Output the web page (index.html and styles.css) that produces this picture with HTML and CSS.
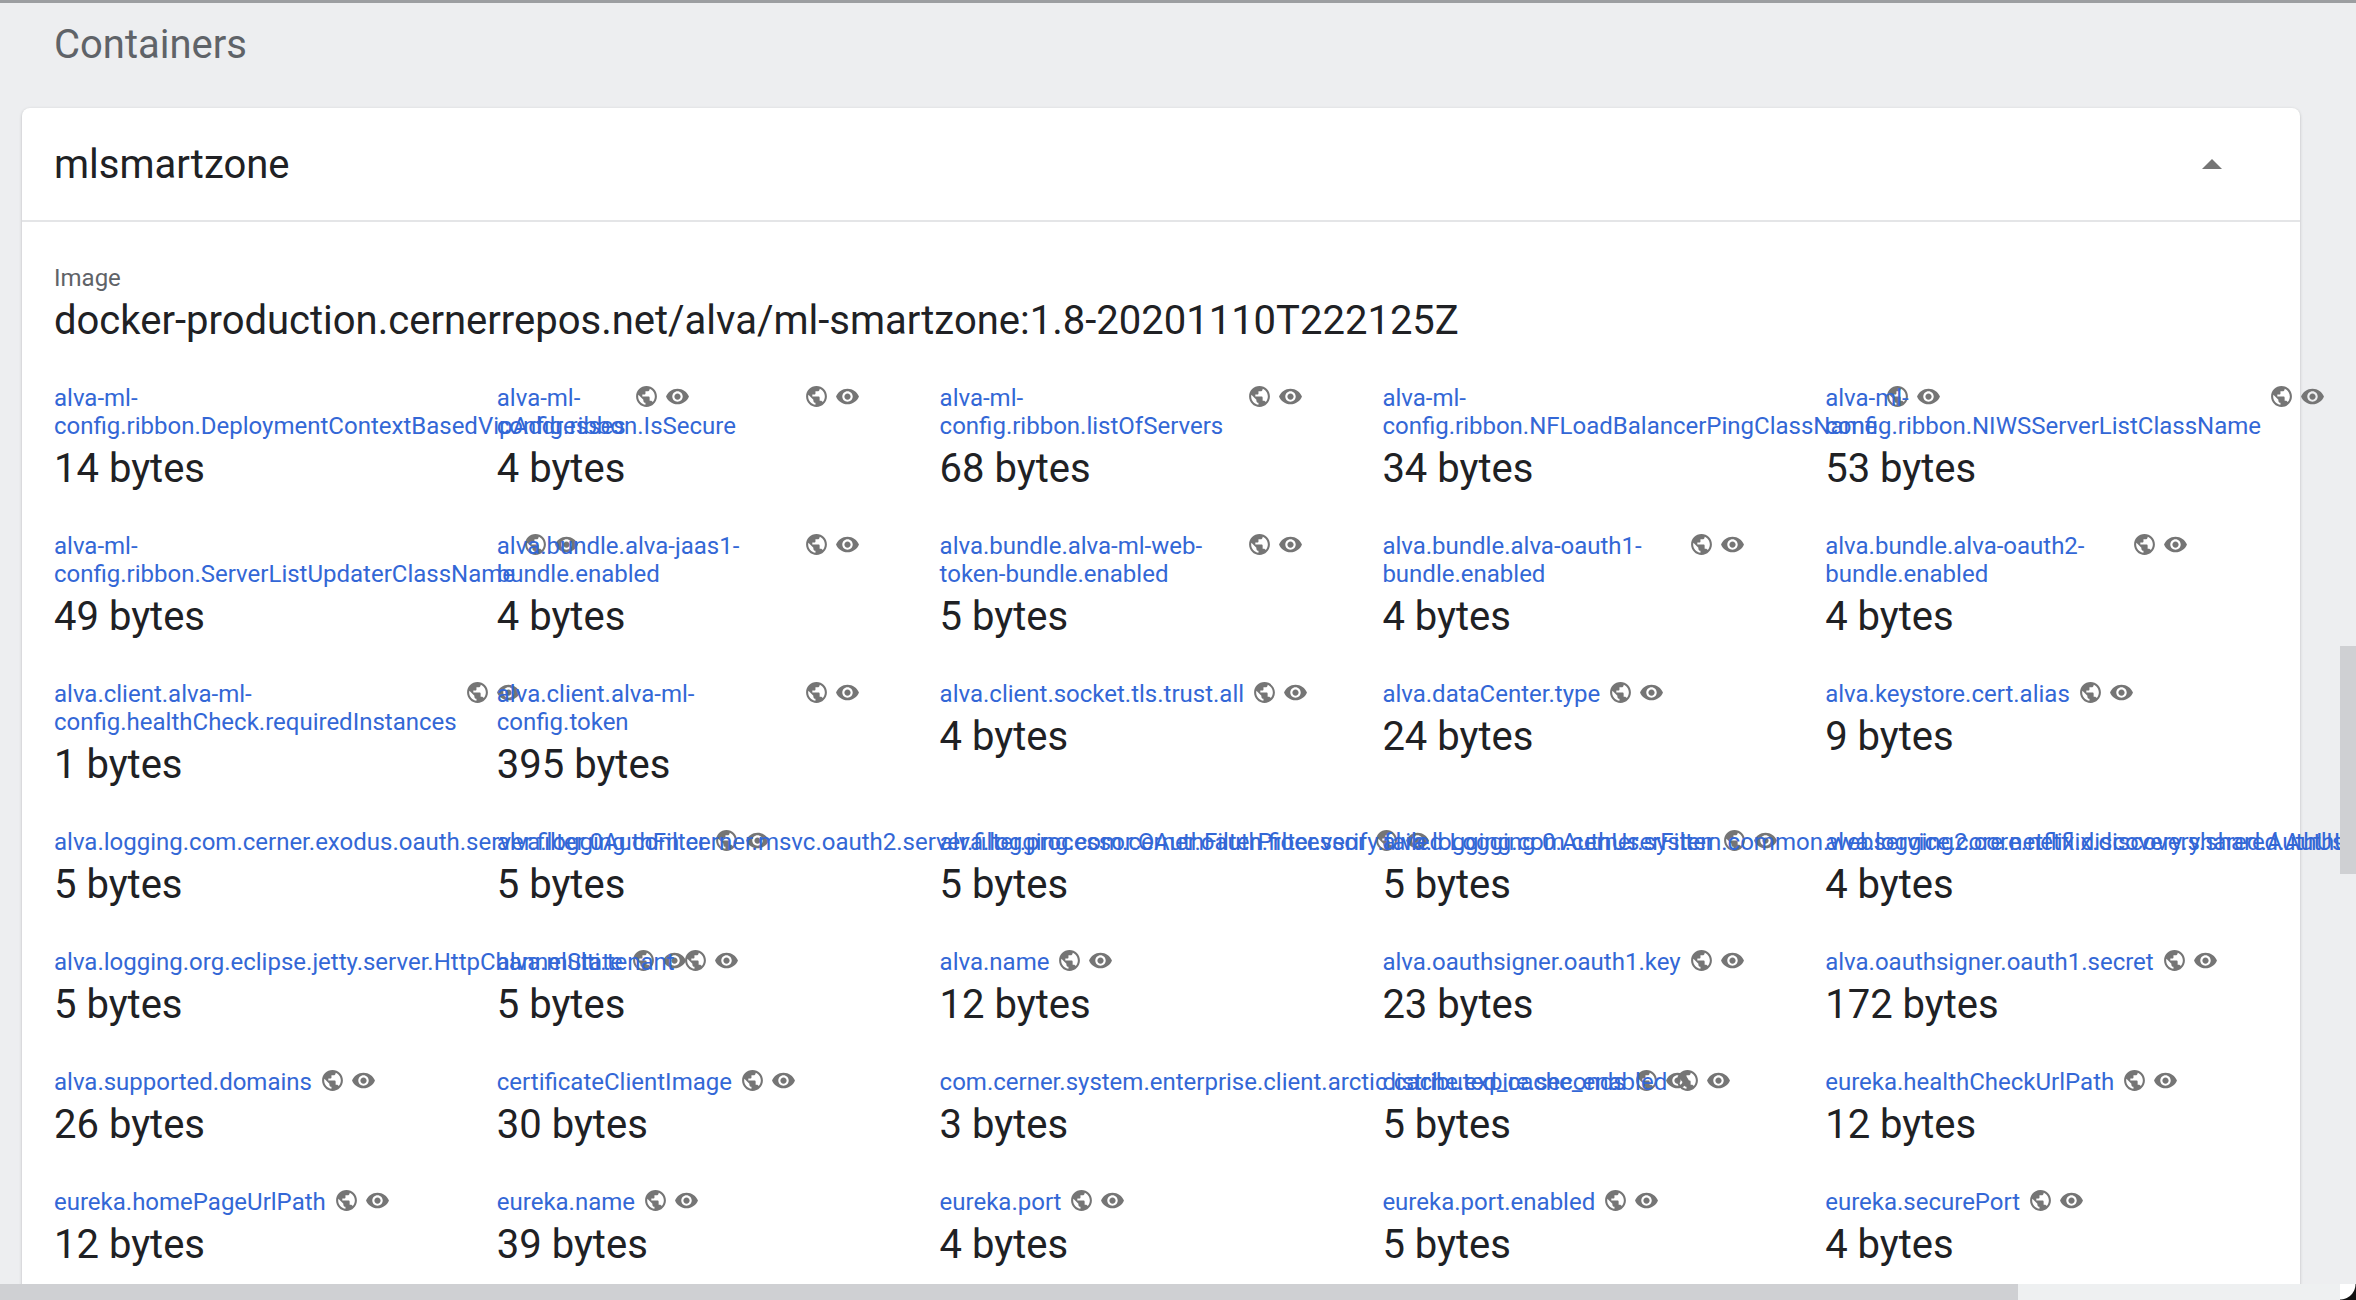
FILE: index.html
```html
<!DOCTYPE html>
<html lang="en">
<head>
  <meta charset="UTF-8" />
  <title>Containers</title>
  <meta name="viewport" content="width=device-width, initial-scale=1.0" />
  <link rel="stylesheet" href="styles.css">
</head>
<body>

<svg class="icon-defs" aria-hidden="true">
  <symbol id="i-public" viewBox="0 0 24 24"><path d="M12 2C6.48 2 2 6.48 2 12s4.48 10 10 10 10-4.48 10-10S17.52 2 12 2zm-1 17.93c-3.95-.49-7-3.85-7-7.93 0-.62.08-1.21.21-1.79L9 15v1c0 1.1.9 2 2 2v1.93zm6.9-2.54c-.26-.81-1-1.39-1.9-1.39h-1v-3c0-.55-.45-1-1-1H8v-2h2c.55 0 1-.45 1-1V7h2c1.1 0 2-.9 2-2v-.41c2.93 1.19 5 4.06 5 7.41 0 2.08-.8 3.97-2.1 5.39z"/></symbol>
  <symbol id="i-eye" viewBox="0 0 24 24"><path d="M12 4.5C7 4.5 2.73 7.61 1 12c1.73 4.39 6 7.5 11 7.5s9.27-3.11 11-7.5c-1.73-4.39-6-7.5-11-7.5zM12 17c-2.76 0-5-2.24-5-5s2.24-5 5-5 5 2.24 5 5-2.24 5-5 5zm0-8c-1.66 0-3 1.34-3 3s1.34 3 3 3 3-1.34 3-3-1.34-3-3-3z"/></symbol>
</svg>

<div class="page">
  <h2 class="section-title">Containers</h2>

  <section class="card">
    <header class="card-head">
      <h3>mlsmartzone</h3>
      <span class="caret"></span>
    </header>

    <div class="card-body">
      <div class="image-label">Image</div>
      <div class="image-value">docker-production.cernerrepos.net/alva/ml-smartzone:1.8-20201110T222125Z</div>

      <div class="env-grid">
        <div class="env"><div class="env-head"><a class="env-name">alva-ml-config.ribbon.DeploymentContextBasedVipAddresses</a><span class="env-icons"><svg><use href="#i-public"/></svg><svg><use href="#i-eye"/></svg></span></div><div class="env-size">14 bytes</div></div>
        <div class="env"><div class="env-head"><a class="env-name">alva-ml-config.ribbon.IsSecure</a><span class="env-icons"><svg><use href="#i-public"/></svg><svg><use href="#i-eye"/></svg></span></div><div class="env-size">4 bytes</div></div>
        <div class="env"><div class="env-head"><a class="env-name">alva-ml-config.ribbon.listOfServers</a><span class="env-icons"><svg><use href="#i-public"/></svg><svg><use href="#i-eye"/></svg></span></div><div class="env-size">68 bytes</div></div>
        <div class="env"><div class="env-head"><a class="env-name">alva-ml-config.ribbon.NFLoadBalancerPingClassName</a><span class="env-icons"><svg><use href="#i-public"/></svg><svg><use href="#i-eye"/></svg></span></div><div class="env-size">34 bytes</div></div>
        <div class="env"><div class="env-head"><a class="env-name">alva-ml-config.ribbon.NIWSServerListClassName</a><span class="env-icons"><svg><use href="#i-public"/></svg><svg><use href="#i-eye"/></svg></span></div><div class="env-size">53 bytes</div></div>

        <div class="env"><div class="env-head"><a class="env-name">alva-ml-config.ribbon.ServerListUpdaterClassName</a><span class="env-icons"><svg><use href="#i-public"/></svg><svg><use href="#i-eye"/></svg></span></div><div class="env-size">49 bytes</div></div>
        <div class="env"><div class="env-head"><a class="env-name">alva.bundle.alva-jaas1-bundle.enabled</a><span class="env-icons"><svg><use href="#i-public"/></svg><svg><use href="#i-eye"/></svg></span></div><div class="env-size">4 bytes</div></div>
        <div class="env"><div class="env-head"><a class="env-name">alva.bundle.alva-ml-web-token-bundle.enabled</a><span class="env-icons"><svg><use href="#i-public"/></svg><svg><use href="#i-eye"/></svg></span></div><div class="env-size">5 bytes</div></div>
        <div class="env"><div class="env-head"><a class="env-name">alva.bundle.alva-oauth1-bundle.enabled</a><span class="env-icons"><svg><use href="#i-public"/></svg><svg><use href="#i-eye"/></svg></span></div><div class="env-size">4 bytes</div></div>
        <div class="env"><div class="env-head"><a class="env-name">alva.bundle.alva-oauth2-bundle.enabled</a><span class="env-icons"><svg><use href="#i-public"/></svg><svg><use href="#i-eye"/></svg></span></div><div class="env-size">4 bytes</div></div>

        <div class="env"><div class="env-head"><a class="env-name">alva.client.alva-ml-config.healthCheck.requiredInstances</a><span class="env-icons"><svg><use href="#i-public"/></svg><svg><use href="#i-eye"/></svg></span></div><div class="env-size">1 bytes</div></div>
        <div class="env"><div class="env-head"><a class="env-name">alva.client.alva-ml-config.token</a><span class="env-icons"><svg><use href="#i-public"/></svg><svg><use href="#i-eye"/></svg></span></div><div class="env-size">395 bytes</div></div>
        <div class="env"><div class="env-head"><a class="env-name">alva.client.socket.tls.trust.all</a><span class="env-icons"><svg><use href="#i-public"/></svg><svg><use href="#i-eye"/></svg></span></div><div class="env-size">4 bytes</div></div>
        <div class="env"><div class="env-head"><a class="env-name">alva.dataCenter.type</a><span class="env-icons"><svg><use href="#i-public"/></svg><svg><use href="#i-eye"/></svg></span></div><div class="env-size">24 bytes</div></div>
        <div class="env"><div class="env-head"><a class="env-name">alva.keystore.cert.alias</a><span class="env-icons"><svg><use href="#i-public"/></svg><svg><use href="#i-eye"/></svg></span></div><div class="env-size">9 bytes</div></div>

        <div class="env"><div class="env-head"><a class="env-name">alva.logging.com.cerner.exodus.oauth.server.filter.0AuthFilter</a><span class="env-icons"><svg><use href="#i-public"/></svg><svg><use href="#i-eye"/></svg></span></div><div class="env-size">5 bytes</div></div>
        <div class="env"><div class="env-head"><a class="env-name">alva.logging.com.cerner.msvc.oauth2.server.filter.processor.OAuthFilterProcessor</a><span class="env-icons"><svg><use href="#i-public"/></svg><svg><use href="#i-eye"/></svg></span></div><div class="env-size">5 bytes</div></div>
        <div class="env"><div class="env-head"><a class="env-name">alva.logging.com.cerner.oauth.filter.verify.failed.Logging.0.AuthUserFilter</a><span class="env-icons"><svg><use href="#i-public"/></svg><svg><use href="#i-eye"/></svg></span></div><div class="env-size">5 bytes</div></div>
        <div class="env"><div class="env-head"><a class="env-name">alva.logging.com.cerner.system.common.webservice.core.netflix.discovery.shared.AuthUserFilterLive</a><span class="env-icons"><svg><use href="#i-public"/></svg><svg><use href="#i-eye"/></svg></span></div><div class="env-size">5 bytes</div></div>
        <div class="env"><div class="env-head"><a class="env-name">alva.logging2.core.netflix.discovery.shared.AuthUserFilterLive.Resolver</a><span class="env-icons"><svg><use href="#i-public"/></svg><svg><use href="#i-eye"/></svg></span></div><div class="env-size">4 bytes</div></div>

        <div class="env"><div class="env-head"><a class="env-name">alva.logging.org.eclipse.jetty.server.HttpChannelState</a><span class="env-icons"><svg><use href="#i-public"/></svg><svg><use href="#i-eye"/></svg></span></div><div class="env-size">5 bytes</div></div>
        <div class="env"><div class="env-head"><a class="env-name">alva.multi.tenant</a><span class="env-icons"><svg><use href="#i-public"/></svg><svg><use href="#i-eye"/></svg></span></div><div class="env-size">5 bytes</div></div>
        <div class="env"><div class="env-head"><a class="env-name">alva.name</a><span class="env-icons"><svg><use href="#i-public"/></svg><svg><use href="#i-eye"/></svg></span></div><div class="env-size">12 bytes</div></div>
        <div class="env"><div class="env-head"><a class="env-name">alva.oauthsigner.oauth1.key</a><span class="env-icons"><svg><use href="#i-public"/></svg><svg><use href="#i-eye"/></svg></span></div><div class="env-size">23 bytes</div></div>
        <div class="env"><div class="env-head"><a class="env-name">alva.oauthsigner.oauth1.secret</a><span class="env-icons"><svg><use href="#i-public"/></svg><svg><use href="#i-eye"/></svg></span></div><div class="env-size">172 bytes</div></div>

        <div class="env"><div class="env-head"><a class="env-name">alva.supported.domains</a><span class="env-icons"><svg><use href="#i-public"/></svg><svg><use href="#i-eye"/></svg></span></div><div class="env-size">26 bytes</div></div>
        <div class="env"><div class="env-head"><a class="env-name">certificateClientImage</a><span class="env-icons"><svg><use href="#i-public"/></svg><svg><use href="#i-eye"/></svg></span></div><div class="env-size">30 bytes</div></div>
        <div class="env"><div class="env-head"><a class="env-name">com.cerner.system.enterprise.client.arctic.cache.expire.seconds</a><span class="env-icons"><svg><use href="#i-public"/></svg><svg><use href="#i-eye"/></svg></span></div><div class="env-size">3 bytes</div></div>
        <div class="env"><div class="env-head"><a class="env-name">distributed_cache_enabled</a><span class="env-icons"><svg><use href="#i-public"/></svg><svg><use href="#i-eye"/></svg></span></div><div class="env-size">5 bytes</div></div>
        <div class="env"><div class="env-head"><a class="env-name">eureka.healthCheckUrlPath</a><span class="env-icons"><svg><use href="#i-public"/></svg><svg><use href="#i-eye"/></svg></span></div><div class="env-size">12 bytes</div></div>

        <div class="env"><div class="env-head"><a class="env-name">eureka.homePageUrlPath</a><span class="env-icons"><svg><use href="#i-public"/></svg><svg><use href="#i-eye"/></svg></span></div><div class="env-size">12 bytes</div></div>
        <div class="env"><div class="env-head"><a class="env-name">eureka.name</a><span class="env-icons"><svg><use href="#i-public"/></svg><svg><use href="#i-eye"/></svg></span></div><div class="env-size">39 bytes</div></div>
        <div class="env"><div class="env-head"><a class="env-name">eureka.port</a><span class="env-icons"><svg><use href="#i-public"/></svg><svg><use href="#i-eye"/></svg></span></div><div class="env-size">4 bytes</div></div>
        <div class="env"><div class="env-head"><a class="env-name">eureka.port.enabled</a><span class="env-icons"><svg><use href="#i-public"/></svg><svg><use href="#i-eye"/></svg></span></div><div class="env-size">5 bytes</div></div>
        <div class="env"><div class="env-head"><a class="env-name">eureka.securePort</a><span class="env-icons"><svg><use href="#i-public"/></svg><svg><use href="#i-eye"/></svg></span></div><div class="env-size">4 bytes</div></div>
      </div>
    </div>
  </section>
</div>

<div class="hscroll"><div class="hscroll-thumb"></div></div>
<div class="vscroll-thumb"></div>
<div class="scroll-corner"></div>

</body>
</html>
```

FILE: styles.css
```css
html, body { margin: 0; height: 100%; overflow: hidden; }
body {
  background: #edeef0; color: #202124;
  font-family: Roboto, Arial, sans-serif;
}
.icon-defs { display: none; }

.page {
  height: 1300px; box-sizing: border-box; overflow: hidden;
  padding: 0 56px 0 22px;
  border-top: 3px solid #9c9ea1;
}

.section-title {
  margin: 0; padding: 22px 0 0 32px;
  font-size: 40px; line-height: 40px; font-weight: 400;
  color: #5f6368;
}

.card {
  margin-top: 43px;
  background: #fff; border-radius: 8px 8px 0 0;
  box-shadow: 0 1px 3px rgba(60, 64, 67, .3);
}
.card-head {
  display: flex; align-items: center; justify-content: space-between;
  height: 112px; padding: 0 78px 0 32px;
  border-bottom: 2px solid #e4e5e7;
}
.card-head h3 { margin: 0; font-size: 40px; font-weight: 400; }
.caret {
  width: 0; height: 0;
  border-left: 10px solid transparent; border-right: 10px solid transparent;
  border-bottom: 10px solid #757575;
}

.card-body { padding: 41px 32px 60px; }
.image-label { font-size: 24px; line-height: 30px; color: #5f6368; }
.image-value { font-size: 40px; line-height: 50px; margin: 3px 0 38px; }

.env-grid {
  display: grid; grid-template-columns: repeat(5, minmax(0, 1fr));
  row-gap: 39px;
}
.env { min-width: 0; }
.env-head { display: flex; align-items: flex-start; max-width: 363px; }
.env-name {
  flex: 0 1 auto;
  font-size: 24px; line-height: 28px; color: #3367d6;
}
.env-icons { flex: none; display: flex; gap: 6px; margin-left: 8px; }
.env-icons svg { width: 25px; height: 25px; fill: #757575; }
.env-size { font-size: 40px; line-height: 48px; margin-top: 5px; }

.hscroll {
  position: fixed; left: 0; right: 16px; bottom: 0; height: 16px;
  background: #eef0f1;
}
.hscroll-thumb { width: 2018px; height: 100%; background: #cfd0d3; }
.vscroll-thumb {
  position: fixed; right: 0; top: 646px; width: 16px; height: 228px;
  background: #cfd0d3;
}
.scroll-corner {
  position: fixed; right: 0; bottom: 0; width: 16px; height: 16px;
  background: radial-gradient(circle at 0 0, #fff 15px, #111 16px);
}
```
